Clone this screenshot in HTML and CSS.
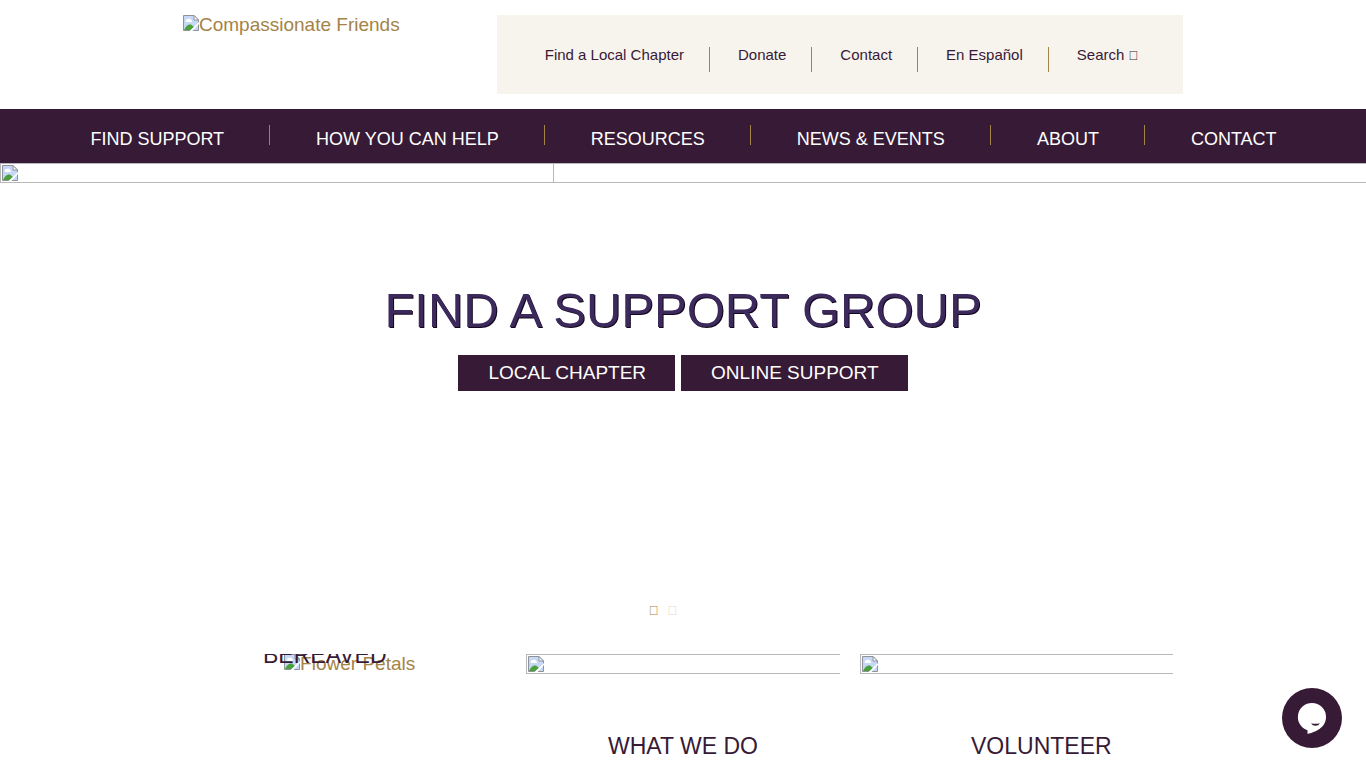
FILE: index.html
```html
<!DOCTYPE html>
<html lang="en">
<head>
  <meta charset="UTF-8" />
  <meta name="viewport" content="width=device-width, initial-scale=1.0"/>
  <title>Compassionate Friends</title>
  <link rel="stylesheet" href="styles.css">
</head>
<body>

<!-- Shared placeholder icon -->
<svg class="sprite" width="0" height="0" aria-hidden="true">
  <symbol id="missing" viewBox="0 0 16 16">
    <path d="M0.5 0.5H11L15.5 5V15.5H0.5Z" fill="#c6d8f5" stroke="#8e9399"/>
    <path d="M3 7a2 2 0 0 1 2-3 2 2 0 0 1 3 1 1.500 1.500 0 0 1 1 2Z" fill="#fff"/>
    <path d="M1 15C3 10 6 9 8 9.500L11 12 8 15Z" fill="#4aa13c"/>
    <path d="M11 0.500V5H15.5Z" fill="#fff" stroke="#8e9399"/>
    <path d="M16 7V9L9.500 16H6.500Z" fill="#fff"/>
  </symbol>
</svg>

<header class="header">
  <a href="#" class="logo"><svg class="missing-icon"><use href="#missing"/></svg>Compassionate Friends</a>
  <nav class="top-nav">
    <ul>
      <li><a href="#">Find a Local Chapter</a></li>
      <li><a href="#">Donate</a></li>
      <li><a href="#">Contact</a></li>
      <li><a href="#">En Español</a></li>
      <li><a href="#">Search <span class="icon">&#xf002;</span></a></li>
    </ul>
  </nav>
</header>

<nav class="main-nav">
  <ul>
    <li><a href="#">Find Support</a></li>
    <li><a href="#">How You Can Help</a></li>
    <li><a href="#">Resources</a></li>
    <li><a href="#">News &amp; Events</a></li>
    <li><a href="#">About</a></li>
    <li><a href="#">Contact</a></li>
  </ul>
</nav>

<!-- Slider -->
<section class="slider">
  <div class="slide-images">
    <div class="missing-image slide-first"><svg class="missing-icon"><use href="#missing"/></svg></div>
    <div class="missing-image slide-next"></div>
  </div>
  <div class="slide-content">
    <h1>Find a Support Group</h1>
    <div class="slide-buttons">
      <a href="#" class="btn">Local Chapter</a>
      <a href="#" class="btn">Online Support</a>
    </div>
  </div>
  <div class="slide-dots">
    <button class="active" aria-label="Slide 1">&#xf111;</button>
    <button aria-label="Slide 2">&#xf111;</button>
  </div>
</section>

<!-- Cards -->
<section class="cards">
  <a href="#" class="card card-bereaved">
    <span class="card-alt"><svg class="missing-icon"><use href="#missing"/></svg>Flower Petals</span>
    <h2>Bereaved</h2>
  </a>
  <a href="#" class="card">
    <div class="missing-image"><svg class="missing-icon"><use href="#missing"/></svg></div>
    <h2>What We Do</h2>
  </a>
  <a href="#" class="card card-volunteer">
    <div class="missing-image"><svg class="missing-icon"><use href="#missing"/></svg></div>
    <h2>Volunteer</h2>
  </a>
</section>

<button class="chat" aria-label="Open chat">
  <svg width="60" height="60" viewBox="0 0 60 60">
    <path d="M30 15a14 14 0 0 0-4.500 27.300V46C33 44 44 40 44 29A14 14 0 0 0 30 15Z" fill="#fff"/>
    <path d="M29 35.200Q33.500 36.200 38 35.200Q36.500 37.800 33.500 37.800Q30.500 37.800 29 35.200Z" fill="#371a36"/>
  </svg>
</button>

</body>
</html>
```
FILE: styles.css
```css
* {
  box-sizing: border-box;
}

body {
  margin: 0;
  font-family: "Liberation Sans", Arial, sans-serif;
  font-size: 19px;
  color: #371a36;
  background: #fff;
}

a {
  color: #a48347;
  text-decoration: none;
}

ul {
  display: flex;
  justify-content: center;
  margin: 0;
  padding: 0;
  list-style: none;
}

.sprite {
  position: absolute;
}

.missing-icon {
  width: 16px;
  height: 16px;
  flex: none;
}

.missing-image {
  display: flex;
  height: 20px;
  padding: 1px;
  border: 1px solid #b8b8b8;
}

/* Header */
.header {
  display: flex;
  justify-content: space-between;
  max-width: 1000px;
  margin: 0 auto;
  padding: 15px 0;
}

.logo {
  display: flex;
  line-height: 20px;
}

.top-nav {
  width: 686px;
  padding: 32px 0 22px;
  background: #f7f3ed;
}

.top-nav li {
  height: 25px;
  padding: 0 25px 0 28px;
  border-right: 1px solid #a48347;
}

.top-nav li:last-child {
  border-right: none;
}

.top-nav a {
  display: block;
  color: #371a36;
  font-size: 15px;
  line-height: 16px;
}

.icon {
  font-size: 13px;
}

/* Main navigation */
.main-nav {
  padding: 16px 0 18px;
  background: #371a36;
}

.main-nav li {
  height: 20px;
  padding: 0 45px 0 46px;
  border-right: 1px solid #a48347;
}

.main-nav li:last-child {
  border-right: none;
}

.main-nav a {
  display: block;
  color: #fff;
  font-size: 18px;
  line-height: 28px;
  text-transform: uppercase;
  white-space: nowrap;
}

/* Slider */
.slide-images {
  display: flex;
}

.slide-first {
  width: 554px;
}

.slide-next {
  flex: 1;
  border-left: none;
  border-right: none;
}

.slide-content {
  padding-top: 98px;
  text-align: center;
}

h1 {
  margin: 0;
  color: #3d2a5c;
  font-size: 49px;
  font-weight: normal;
  line-height: 58px;
  text-transform: uppercase;
  text-shadow: 1px 1px 0 #12061c;
}

.slide-buttons {
  display: flex;
  justify-content: center;
  gap: 6px;
  margin-top: 16px;
}

.btn {
  padding: 0 29px 0 30px;
  color: #fff;
  background: #371a36;
  line-height: 36px;
  text-transform: uppercase;
}

.slide-dots {
  display: flex;
  justify-content: center;
  gap: 9px;
  margin: 210px 40px 0 0;
}

.slide-dots button {
  padding: 0;
  border: none;
  background: none;
  color: #98863a;
  font-family: inherit;
  font-size: 13px;
  line-height: 20px;
  opacity: 0.3;
}

.slide-dots .active {
  opacity: 1;
}

/* Cards */
.cards {
  display: grid;
  grid-template-columns: repeat(3, 1fr);
  gap: 20px;
  max-width: 980px;
  margin: 0 auto;
  padding-top: 33px;
}

.card {
  overflow: hidden;
  text-align: center;
}

.card .missing-image {
  border-right: none;
}

.card h2 {
  margin: 58px 0 0;
  color: #371a36;
  font-size: 23px;
  font-weight: normal;
  line-height: 28px;
  text-transform: uppercase;
}

.card-alt {
  display: flex;
  justify-content: center;
  line-height: 20px;
}

.card-bereaved {
  position: relative;
}

/* Title lies over the image text and is cut by the card's top edge */
.card-bereaved h2 {
  position: absolute;
  top: -13px;
  left: 70px;
  margin: 0;
}

.card-volunteer h2 {
  padding-left: 50px;
}

/* Chat */
.chat {
  position: fixed;
  right: 24px;
  bottom: 20px;
  width: 60px;
  height: 60px;
  padding: 0;
  border: none;
  border-radius: 50%;
  background: #371a36;
  cursor: pointer;
}
```
